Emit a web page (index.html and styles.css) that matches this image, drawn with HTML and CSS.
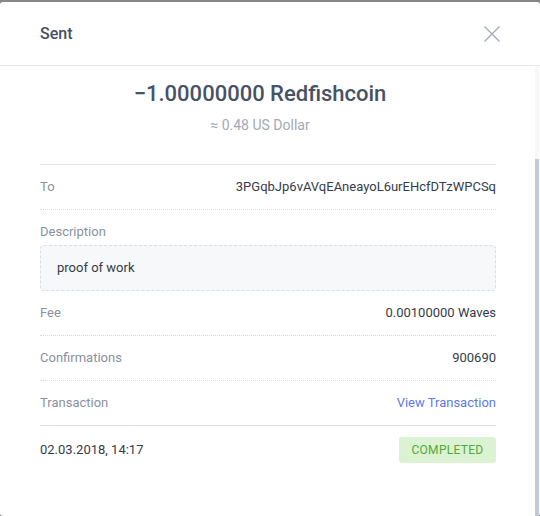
FILE: index.html
```html
<!DOCTYPE html>
<html>
<head>
<meta charset="utf-8">
<link rel="stylesheet" href="styles.css">
</head>
<body>
<div class="modal">
  <header class="modal-header">
    <h1 class="title">Sent</h1>
    <button class="close" aria-label="Close">
      <svg width="16" height="16" viewBox="0 0 16 16"><path d="M0.5 0.5 L15.5 15.5 M15.5 0.5 L0.5 15.5" stroke="#a2aaba" stroke-width="1.4" fill="none"/></svg>
    </button>
  </header>
  <div class="modal-body">
    <div class="summary">
      <div class="amount">−1.00000000 Redfishcoin</div>
      <div class="fiat">≈ 0.48 US Dollar</div>
    </div>
    <div class="details">
      <div class="row">
        <span class="label">To</span>
        <span class="value">3PGqbJp6vAVqEAneayoL6urEHcfDTzWPCSq</span>
      </div>
      <div class="row row-block">
        <span class="label">Description</span>
        <div class="note">proof of work</div>
      </div>
      <div class="row">
        <span class="label">Fee</span>
        <span class="value">0.00100000 Waves</span>
      </div>
      <div class="row">
        <span class="label">Confirmations</span>
        <span class="value">900690</span>
      </div>
      <div class="row row-solid">
        <span class="label">Transaction</span>
        <a class="link" href="#">View Transaction</a>
      </div>
      <div class="row row-footer">
        <span class="value">02.03.2018, 14:17</span>
        <span class="badge">COMPLETED</span>
      </div>
    </div>
    <div class="scrollbar"><div class="thumb"></div></div>
  </div>
</div>
</body>
</html>
```
FILE: styles.css
```css
* { box-sizing: border-box; }
html, body { margin: 0; padding: 0; }
body {
  background: #878787;
  font-family: Roboto, "Liberation Sans", sans-serif;
  width: 540px;
  height: 516px;
  overflow: hidden;
  padding-top: 2px;
}
.modal {
  background: #fff;
  width: 540px;
  height: 514px;
  border-radius: 3px;
  overflow: hidden;
  display: flex;
  flex-direction: column;
}
.modal-header {
  height: 64px;
  flex: none;
  display: flex;
  align-items: center;
  justify-content: space-between;
  padding: 0 40px;
  border-bottom: 1px solid #e4e6ea;
}
.title {
  margin: 0;
  font-size: 16px;
  font-weight: 500;
  color: #465064;
}
.close {
  border: 0;
  background: none;
  padding: 0;
  width: 16px;
  height: 16px;
  display: block;
}
.close svg { display: block; }
.modal-body {
  position: relative;
  flex: 1;
  padding: 0 44px 0 40px;
}
.summary {
  height: 98px;
  margin-right: 16px;
  display: flex;
  flex-direction: column;
  align-items: center;
  padding-top: 14px;
}
.amount {
  font-size: 22px;
  font-weight: 500;
  color: #485266;
  line-height: 28px;
}
.fiat {
  margin-top: 8px;
  font-size: 14px;
  color: #a2a9b6;
  line-height: 18px;
}
.details {
  border-top: 1px solid #dfe3ea;
}
.row {
  display: flex;
  justify-content: space-between;
  align-items: center;
  padding: 14px 0;
  line-height: 16px;
  font-size: 13px;
  border-bottom: 1px dotted #d6dae2;
}
.row-block {
  display: block;
  border-bottom: 0;
  padding-bottom: 0;
}
.row-block .label { display: block; margin-bottom: 5px; }
.row-solid { border-bottom: 1px solid #dcdfe6; }
.row-footer {
  border-bottom: 0;
  padding: 11px 0;
}
.label { color: #8b919e; }
.value { color: #353b49; }
.link { color: #6079ea; text-decoration: none; }
.note {
  height: 46px;
  background: #f7f8fa;
  border: 1px dashed #d8dde6;
  border-radius: 4px;
  padding: 0 16px;
  display: flex;
  align-items: center;
  color: #353b49;
  font-size: 13px;
}
.badge {
  width: 97px;
  height: 26px;
  background: #dbf3d2;
  color: #56a73a;
  border-radius: 3px;
  display: flex;
  align-items: center;
  justify-content: center;
  font-size: 12px;
  letter-spacing: 0.3px;
}
.scrollbar {
  position: absolute;
  top: 0;
  right: 1px;
  bottom: 0;
  width: 4px;
  background: #f7f8fa;
  display: flex;
  flex-direction: column;
  justify-content: flex-end;
}
.thumb {
  height: 357px;
  background: #c3cad7;
}
```
